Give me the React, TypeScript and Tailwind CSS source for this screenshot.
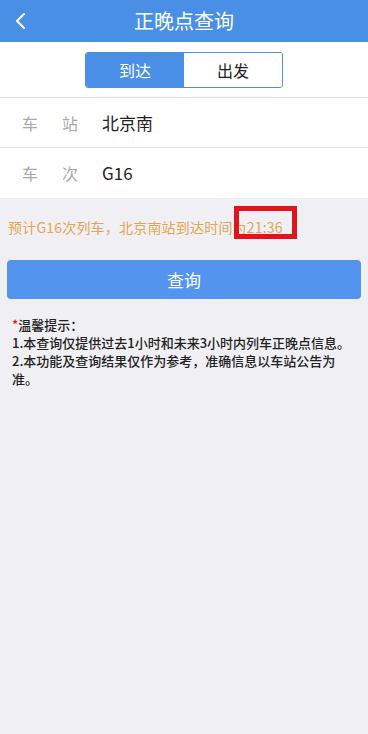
import React from "react";

export default function App() {
  const font = { fontFamily: '"Noto Sans CJK SC", "Noto Sans", sans-serif' };
  return (
    <div className="w-[368px] h-[734px] bg-[#efeff4] flex flex-col" style={font}>
      <div className="h-[42px] bg-[#4a8fe6] flex items-center relative">
        <svg className="absolute left-[14px] top-[11px]" width="14" height="20" viewBox="0 0 14 20">
          <path d="M10 3 L3 10 L10 17" fill="none" stroke="white" strokeWidth="2" strokeLinecap="round" strokeLinejoin="round" />
        </svg>
        <div className="flex-1 text-center text-white text-[20px] leading-none">正晚点查询</div>
      </div>
      <div className="bg-white h-[56px] flex items-center justify-center border-b border-[#dedede]">
        <div className="flex w-[198px] h-[36px] rounded-[3px] border border-[#4a8fe6] overflow-hidden">
          <div className="flex-1 bg-[#4a8fe6] text-white text-[16px] flex items-center justify-center">到达</div>
          <div className="flex-1 bg-white text-[#222] text-[16px] flex items-center justify-center">出发</div>
        </div>
      </div>
      <div className="bg-white">
        <div className="h-[50px] flex items-center border-b border-[#e3e3e3]">
          <div className="w-[102px] pl-[22px] flex text-[16px] text-[#aaa]">
            <span className="w-[40px]">车</span>
            <span>站</span>
          </div>
          <div className="text-[17px] text-[#222]">北京南</div>
        </div>
        <div className="h-[50px] flex items-center">
          <div className="w-[102px] pl-[22px] flex text-[16px] text-[#aaa]">
            <span className="w-[40px]">车</span>
            <span>次</span>
          </div>
          <div className="text-[17px] text-[#222]">G16</div>
        </div>
      </div>
      <div className="h-[62px] flex items-center pl-[8px] pb-[4px]">
        <span className="text-[14px] leading-[20px] tracking-[0.2px] text-[#e5a550] relative">
          预计G16次列车，北京南站到达时间为21:36
          <span className="absolute right-[-14px] top-[-11px] w-[63px] h-[33px] border-[5px] border-[#e0141b]"></span>
        </span>
      </div>
      <div className="px-[7px]">
        <div className="h-[39px] bg-[#5294ee] rounded-[4px] flex items-center justify-center text-white text-[17px]">查询</div>
      </div>
      <div className="px-[12px] pt-[17px] text-[13px] leading-[18px] text-[#222] font-medium">
        <div><span className="text-[#e0141b]">*</span>温馨提示：</div>
        <div>1.本查询仅提供过去1小时和未来3小时内列车正晚点信息。</div>
        <div>2.本功能及查询结果仅作为参考，准确信息以车站公告为准。</div>
      </div>
    </div>
  );
}
